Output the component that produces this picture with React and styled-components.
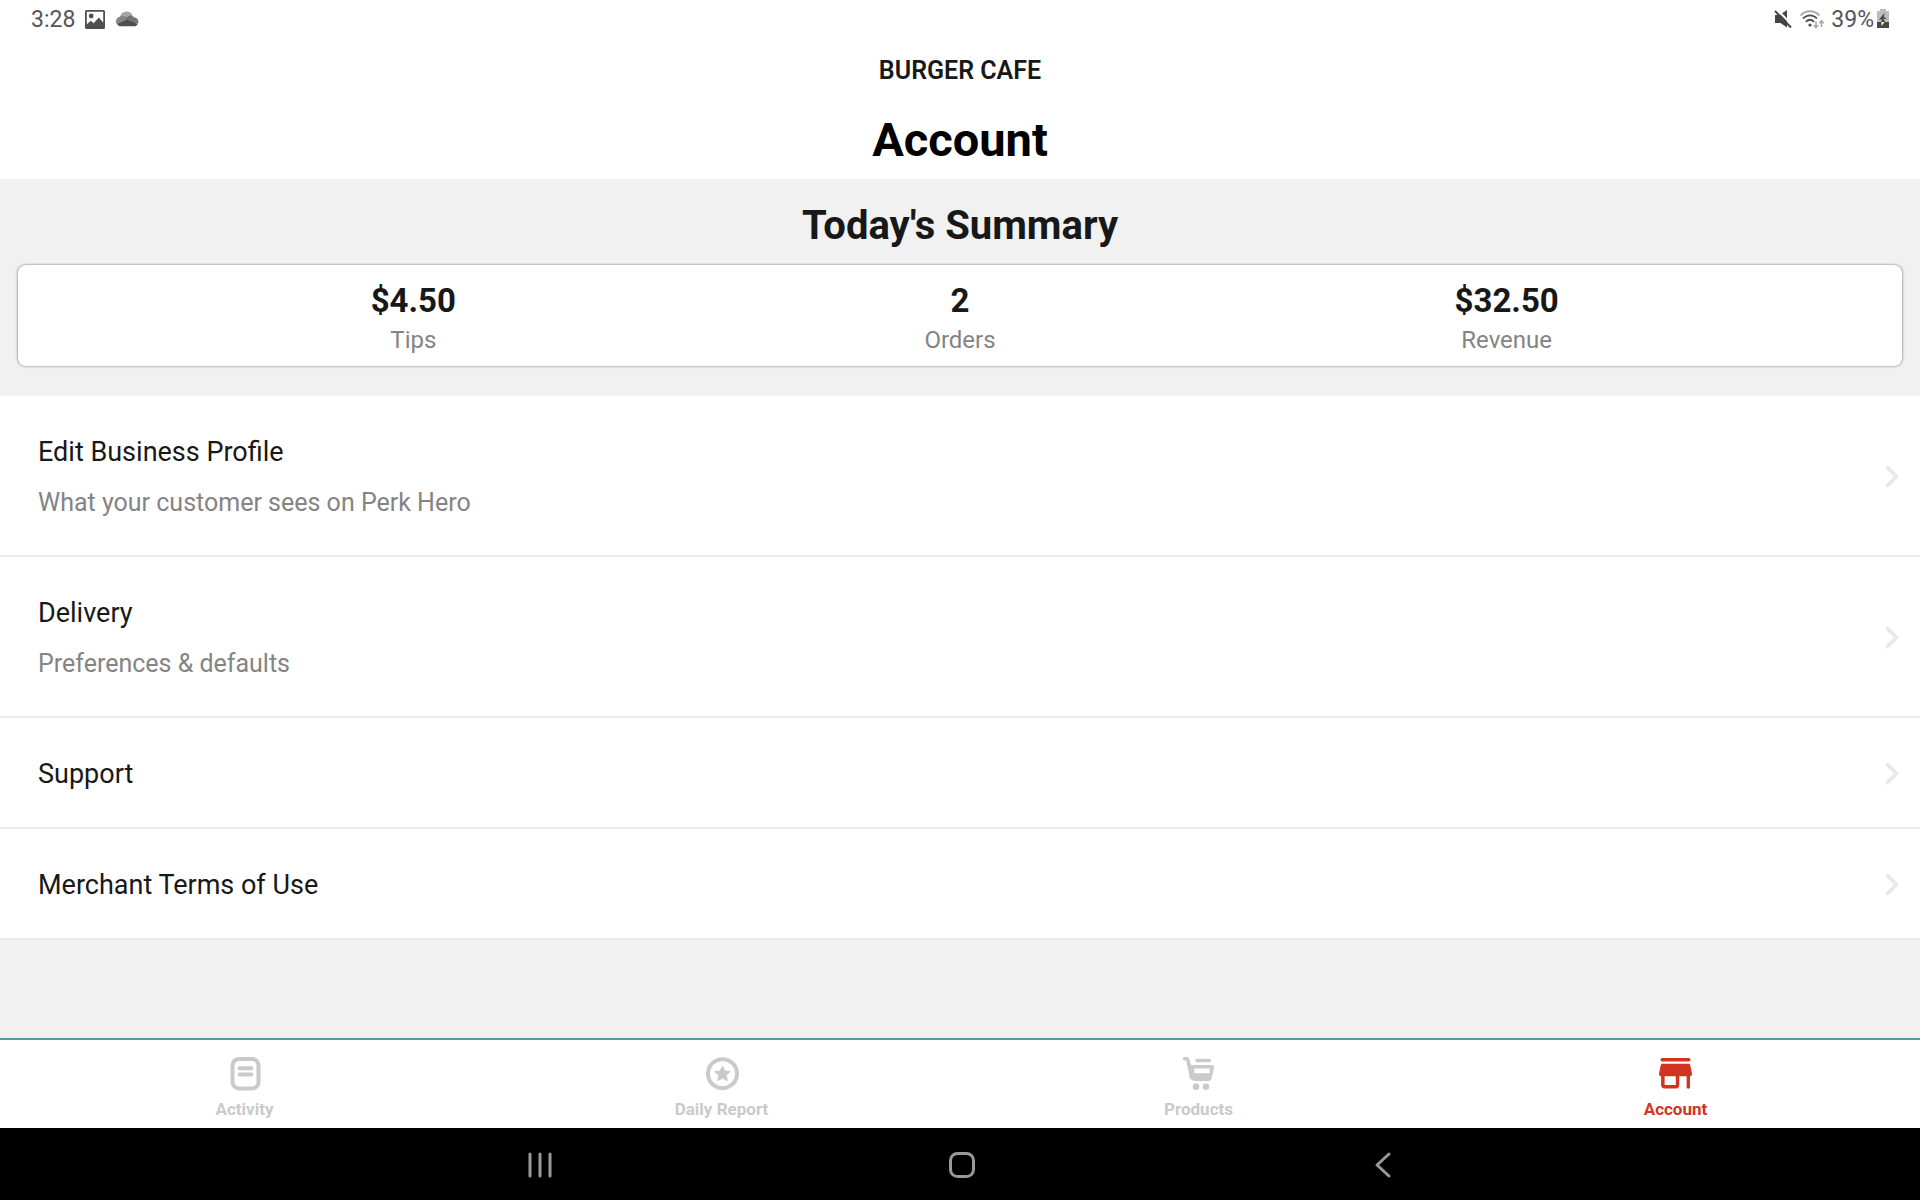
import React, { useState } from "react";
import styled, { createGlobalStyle } from "styled-components";

const stats = [
  { value: "$4.50", label: "Tips" },
  { value: "2", label: "Orders" },
  { value: "$32.50", label: "Revenue" },
];

const links = [
  {
    title: "Edit Business Profile",
    subtitle: "What your customer sees on Perk Hero",
    href: "#profile",
  },
  {
    title: "Delivery",
    subtitle: "Preferences & defaults",
    href: "#delivery",
  },
  { title: "Support", href: "#support" },
  { title: "Merchant Terms of Use", href: "#terms" },
];

const tabs = [
  { name: "Activity", Icon: ActivityIcon },
  { name: "Daily Report", Icon: ReportIcon },
  { name: "Products", Icon: CartIcon },
  { name: "Account", Icon: StoreIcon },
];

function App() {
  const [activeTab, setActiveTab] = useState("Account");

  return (
    <>
      <GlobalStyle />
      <Screen>
        <StatusBar>
          <StatusGroup>
            <span>3:28</span>
            <PictureIcon />
            <CloudIcon />
          </StatusGroup>
          <StatusGroup $tight>
            <MuteIcon />
            <WifiIcon />
            <Battery>
              39%
              <BatteryIcon />
            </Battery>
          </StatusGroup>
        </StatusBar>

        <Header>
          <Business>BURGER CAFE</Business>
          <PageTitle>Account</PageTitle>
        </Header>

        <Main>
          <Summary>
            <SummaryTitle>Today's Summary</SummaryTitle>
            <Card>
              {stats.map((stat) => (
                <Stat key={stat.label}>
                  <StatValue>{stat.value}</StatValue>
                  <StatLabel>{stat.label}</StatLabel>
                </Stat>
              ))}
            </Card>
          </Summary>

          <nav>
            {links.map((link) => (
              <Row key={link.title} href={link.href}>
                <RowText>
                  <RowTitle>{link.title}</RowTitle>
                  {link.subtitle && <RowSubtitle>{link.subtitle}</RowSubtitle>}
                </RowText>
                <ChevronIcon />
              </Row>
            ))}
          </nav>
        </Main>

        <TabBar>
          {tabs.map(({ name, Icon }) => (
            <Tab
              key={name}
              $active={name === activeTab}
              onClick={() => setActiveTab(name)}
            >
              <Icon />
              <TabLabel>{name}</TabLabel>
            </Tab>
          ))}
        </TabBar>

        <SystemBar>
          <SystemButton aria-label="Recent apps">
            <svg width="28" height="28" viewBox="0 0 28 28">
              <path d="M4 3v22M14 3v22M24 3v22" />
            </svg>
          </SystemButton>
          <SystemButton aria-label="Home">
            <svg width="28" height="28" viewBox="0 0 28 28">
              <rect x="2.5" y="2.5" width="23" height="23" rx="7" />
            </svg>
          </SystemButton>
          <SystemButton aria-label="Back">
            <svg width="28" height="28" viewBox="0 0 28 28">
              <path d="M19 3L7 14l12 11" />
            </svg>
          </SystemButton>
        </SystemBar>
      </Screen>
    </>
  );
}

function PictureIcon() {
  return (
    <svg width="22" height="22" viewBox="0 0 22 22">
      <path
        fillRule="evenodd"
        fill="#505050"
        d="M2.500 1h17A1.500 1.500 0 0 1 21 2.500v16A1.500 1.500 0 0 1 19.500 20h-17A1.500 1.500 0 0 1 1 18.500v-16A1.500 1.500 0 0 1 2.500 1zM2.800 2.800v12.400l4-3.400 2.800 2.400 5.200-5.600 4.400 5V2.800z"
      />
      <circle cx="7.200" cy="7" r="2.400" fill="#505050" />
    </svg>
  );
}

function CloudIcon() {
  return (
    <svg width="24" height="22" viewBox="0 0 24 22">
      <path fill="#a6a6a6" d="M5 9a6.500 6.500 0 0 1 12.500-2.500L14 12H6z" />
      <path
        fill="#858585"
        d="M6 7.200c3-.6 5.500.5 8 2.600L4 16.500C-.6 14.800-.2 8.300 6 7.200z"
      />
      <path
        fill="#757575"
        d="M10.500 9.800c1.800-3.600 6.300-4.600 8.500-1.500 3.400.2 5.300 3.600 3.900 6.500L10.500 12z"
      />
      <path
        fill="#4e4e4e"
        d="M2.200 15L12 10.800l10.800 4.200c-.8 1.500-2.200 2.300-3.800 2.300H6c-1.600 0-3-.8-3.800-2.300z"
      />
    </svg>
  );
}

function MuteIcon() {
  return (
    <svg width="20" height="22" viewBox="0 0 20 22">
      <path fill="#454545" d="M2 6h4.500L14 1v17.500L7.500 14H2z" />
      <path stroke="#fff" strokeWidth="2" d="M4 .5l15 15.500" />
      <path stroke="#454545" strokeWidth="2" d="M2 2l16 16.500" />
    </svg>
  );
}

function WifiIcon() {
  return (
    <svg width="26" height="22" viewBox="0 0 26 22" fill="none">
      <path stroke="#aaa" strokeWidth="1.800" d="M1.500 6.500c5-5.700 14-5.700 19 0" />
      <path
        stroke="#4d4d4d"
        strokeWidth="1.800"
        d="M4 9.500c4-4.300 10-4.300 14 0M6.800 12.800c2.600-2.500 5.800-2.500 8.400 0"
      />
      <circle cx="11" cy="16" r="1.600" fill="#4d4d4d" />
      <path
        stroke="#a5a5a5"
        strokeWidth="1.500"
        d="M17 12.500v6M14.800 16.200L17 18.700l2.200-2.500M22.500 18v-6M20.300 14.300l2.200-2.500 2.200 2.500"
      />
    </svg>
  );
}

function BatteryIcon() {
  return (
    <svg width="14" height="22" viewBox="0 0 14 22">
      <path fill="#bdbdbd" d="M4 0h6v2h3v11H1V2h3z" />
      <path fill="#484848" d="M1 13h12v6H1z" />
      <path fill="#484848" d="M8.500 4L3 10.500h3.200L5 13h4l-1.500-3.300H11L8 8z" />
      <path fill="#fff" d="M5.500 13h3l-3 4z" />
    </svg>
  );
}

function ChevronIcon() {
  return (
    <svg width="16" height="26" viewBox="0 0 16 26" fill="none">
      <path
        d="M3.500 3.500l9 9-9 9"
        stroke="#e8e8e8"
        strokeWidth="3.800"
        strokeLinecap="round"
        strokeLinejoin="round"
      />
    </svg>
  );
}

function ActivityIcon() {
  return (
    <svg width="36" height="36" viewBox="0 0 36 36" fill="none" stroke="currentColor">
      <rect x="5.500" y="3" width="26" height="29.500" rx="6.500" strokeWidth="4" />
      <path d="M12.500 12.300h12M12.500 18.500h12" strokeWidth="4" strokeLinecap="round" />
    </svg>
  );
}

function ReportIcon() {
  return (
    <svg width="36" height="36" viewBox="0 0 36 36">
      <circle cx="18.500" cy="17.700" r="14.500" fill="none" stroke="currentColor" strokeWidth="4" />
      <path
        fill="currentColor"
        stroke="currentColor"
        strokeLinejoin="round"
        d="M18.500 10.200l2.300 4.800 5.400.6-4 3.700 1.100 5.400-4.800-2.700-4.800 2.700 1.100-5.400-4-3.700 5.400-.6z"
      />
    </svg>
  );
}

function CartIcon() {
  return (
    <svg width="36" height="36" viewBox="0 0 36 36">
      <path
        fill="none"
        stroke="currentColor"
        strokeWidth="3.600"
        strokeLinecap="round"
        strokeLinejoin="round"
        d="M3.500 2.800H6l1.400 3 3.300 16"
      />
      <path d="M16 4.500h12.500" stroke="currentColor" strokeWidth="3.400" strokeLinecap="round" />
      <path
        fill="currentColor"
        fillRule="evenodd"
        d="M7.500 9h23.300c1.500 0 2.600 1.200 2.300 2.600l-2.400 10.300c-.5 2-1.800 3.200-3.900 3.200H14c-2 0-3.300-1.200-3.700-3zM13.300 12.600v4.600h15.500v-4.600z"
      />
      <circle cx="15" cy="30.800" r="3.300" fill="currentColor" />
      <circle cx="25" cy="30.800" r="3.300" fill="currentColor" />
    </svg>
  );
}

function StoreIcon() {
  return (
    <svg width="36" height="36" viewBox="1 0 36 36" fill="currentColor">
      <rect x="3.500" y="2" width="30" height="3.600" rx="1.800" />
      <path
        fillRule="evenodd"
        d="M5.500 7.800h26c.8 0 1.500.5 1.700 1.300L35 17.500c.3 1.500-.5 2.500-2 2.700V31a1.700 1.700 0 0 1-3.400 0V20.300h-7.300v9c0 2-1.200 3.200-3.200 3.200H7.300c-2 0-3.200-1.200-3.200-3.200v-9.100c-1.600-.2-2.400-1.200-2.100-2.700l1.800-8.400c.2-.8.900-1.300 1.700-1.300zM7.600 20.300v8.700h11.200v-8.700z"
      />
    </svg>
  );
}

const GlobalStyle = createGlobalStyle`
  * {
    box-sizing: border-box;
  }
  body {
    margin: 0;
    background: #f1f1f1;
    color: #181818;
    font-family: Roboto, "Liberation Sans", sans-serif;
  }
  svg {
    display: block;
    flex-shrink: 0;
  }
`;

const Screen = styled.div`
  display: flex;
  flex-direction: column;
  min-height: 100vh;
`;

const StatusBar = styled.div`
  display: flex;
  justify-content: space-between;
  padding: 5px 30px 0 31px;
  background: #fff;
  color: #555;
  font-size: 23px;
  line-height: 30px;
`;

const StatusGroup = styled.div`
  display: flex;
  align-items: center;
  gap: ${(props) => (props.$tight ? "6px" : "9px")};
`;

const Battery = styled.div`
  display: flex;
  align-items: center;
  gap: 2px;
`;

const Header = styled.header`
  display: flex;
  flex-direction: column;
  align-items: center;
  gap: 23px;
  padding: 20px 0 9px;
  background: #fff;
`;

const Business = styled.div`
  font-size: 25px;
  line-height: 32px;
  font-weight: 600;
`;

const PageTitle = styled.h1`
  margin: 0;
  color: #000;
  font-size: 47px;
  line-height: 60px;
  font-weight: 700;
`;

const Main = styled.main`
  flex: 1;
`;

const Summary = styled.section`
  padding: 17px 18px 30px;
`;

const SummaryTitle = styled.h2`
  margin: 0 0 9px;
  font-size: 40px;
  line-height: 60px;
  font-weight: 700;
  text-align: center;
`;

const Card = styled.div`
  display: grid;
  grid-template-columns: repeat(3, 1fr);
  padding: 15px 122px 8px;
  border-radius: 8px;
  background: #fff;
  box-shadow:
    0 0 2px rgba(0, 0, 0, 0.2),
    -1px 0 3px rgba(0, 0, 0, 0.2),
    1px 0 3px rgba(0, 0, 0, 0.2);
`;

const Stat = styled.div`
  text-align: center;
`;

const StatValue = styled.div`
  font-size: 33px;
  line-height: 42px;
  font-weight: 700;
`;

const StatLabel = styled.div`
  color: #848484;
  font-size: 24px;
  line-height: 36px;
`;

const Row = styled.a`
  display: flex;
  align-items: center;
  justify-content: space-between;
  padding: 38px 20px 35px 38px;
  border-bottom: 2px solid #ebebeb;
  background: #fff;
  color: inherit;
  text-decoration: none;
`;

const RowText = styled.div`
  display: flex;
  flex-direction: column;
  gap: 16px;
`;

const RowTitle = styled.div`
  font-size: 27px;
  line-height: 36px;
`;

const RowSubtitle = styled.div`
  color: #848484;
  font-size: 25px;
  line-height: 34px;
`;

const TabBar = styled.nav`
  display: grid;
  grid-template-columns: repeat(4, 1fr);
  padding: 0 6px;
  border-top: 2px solid #569999;
  background: #fff;
`;

const Tab = styled.button`
  display: flex;
  flex-direction: column;
  align-items: center;
  gap: 5px;
  padding: 16px 0 7px;
  border: none;
  background: none;
  color: ${(props) => (props.$active ? "#d13522" : "#cacaca")};
  font-family: inherit;
  cursor: pointer;
`;

const TabLabel = styled.span`
  font-size: 17px;
  line-height: 24px;
  font-weight: 700;
`;

const SystemBar = styled.div`
  display: flex;
  justify-content: center;
  padding-left: 4px;
  background: #000;
`;

const SystemButton = styled.button`
  display: flex;
  justify-content: center;
  width: 22%;
  padding: 23px 0 21px;
  border: none;
  background: none;
  cursor: pointer;

  svg {
    fill: none;
    stroke: #999;
    stroke-width: 3;
    stroke-linecap: round;
    stroke-linejoin: round;
  }
`;

export default App;
